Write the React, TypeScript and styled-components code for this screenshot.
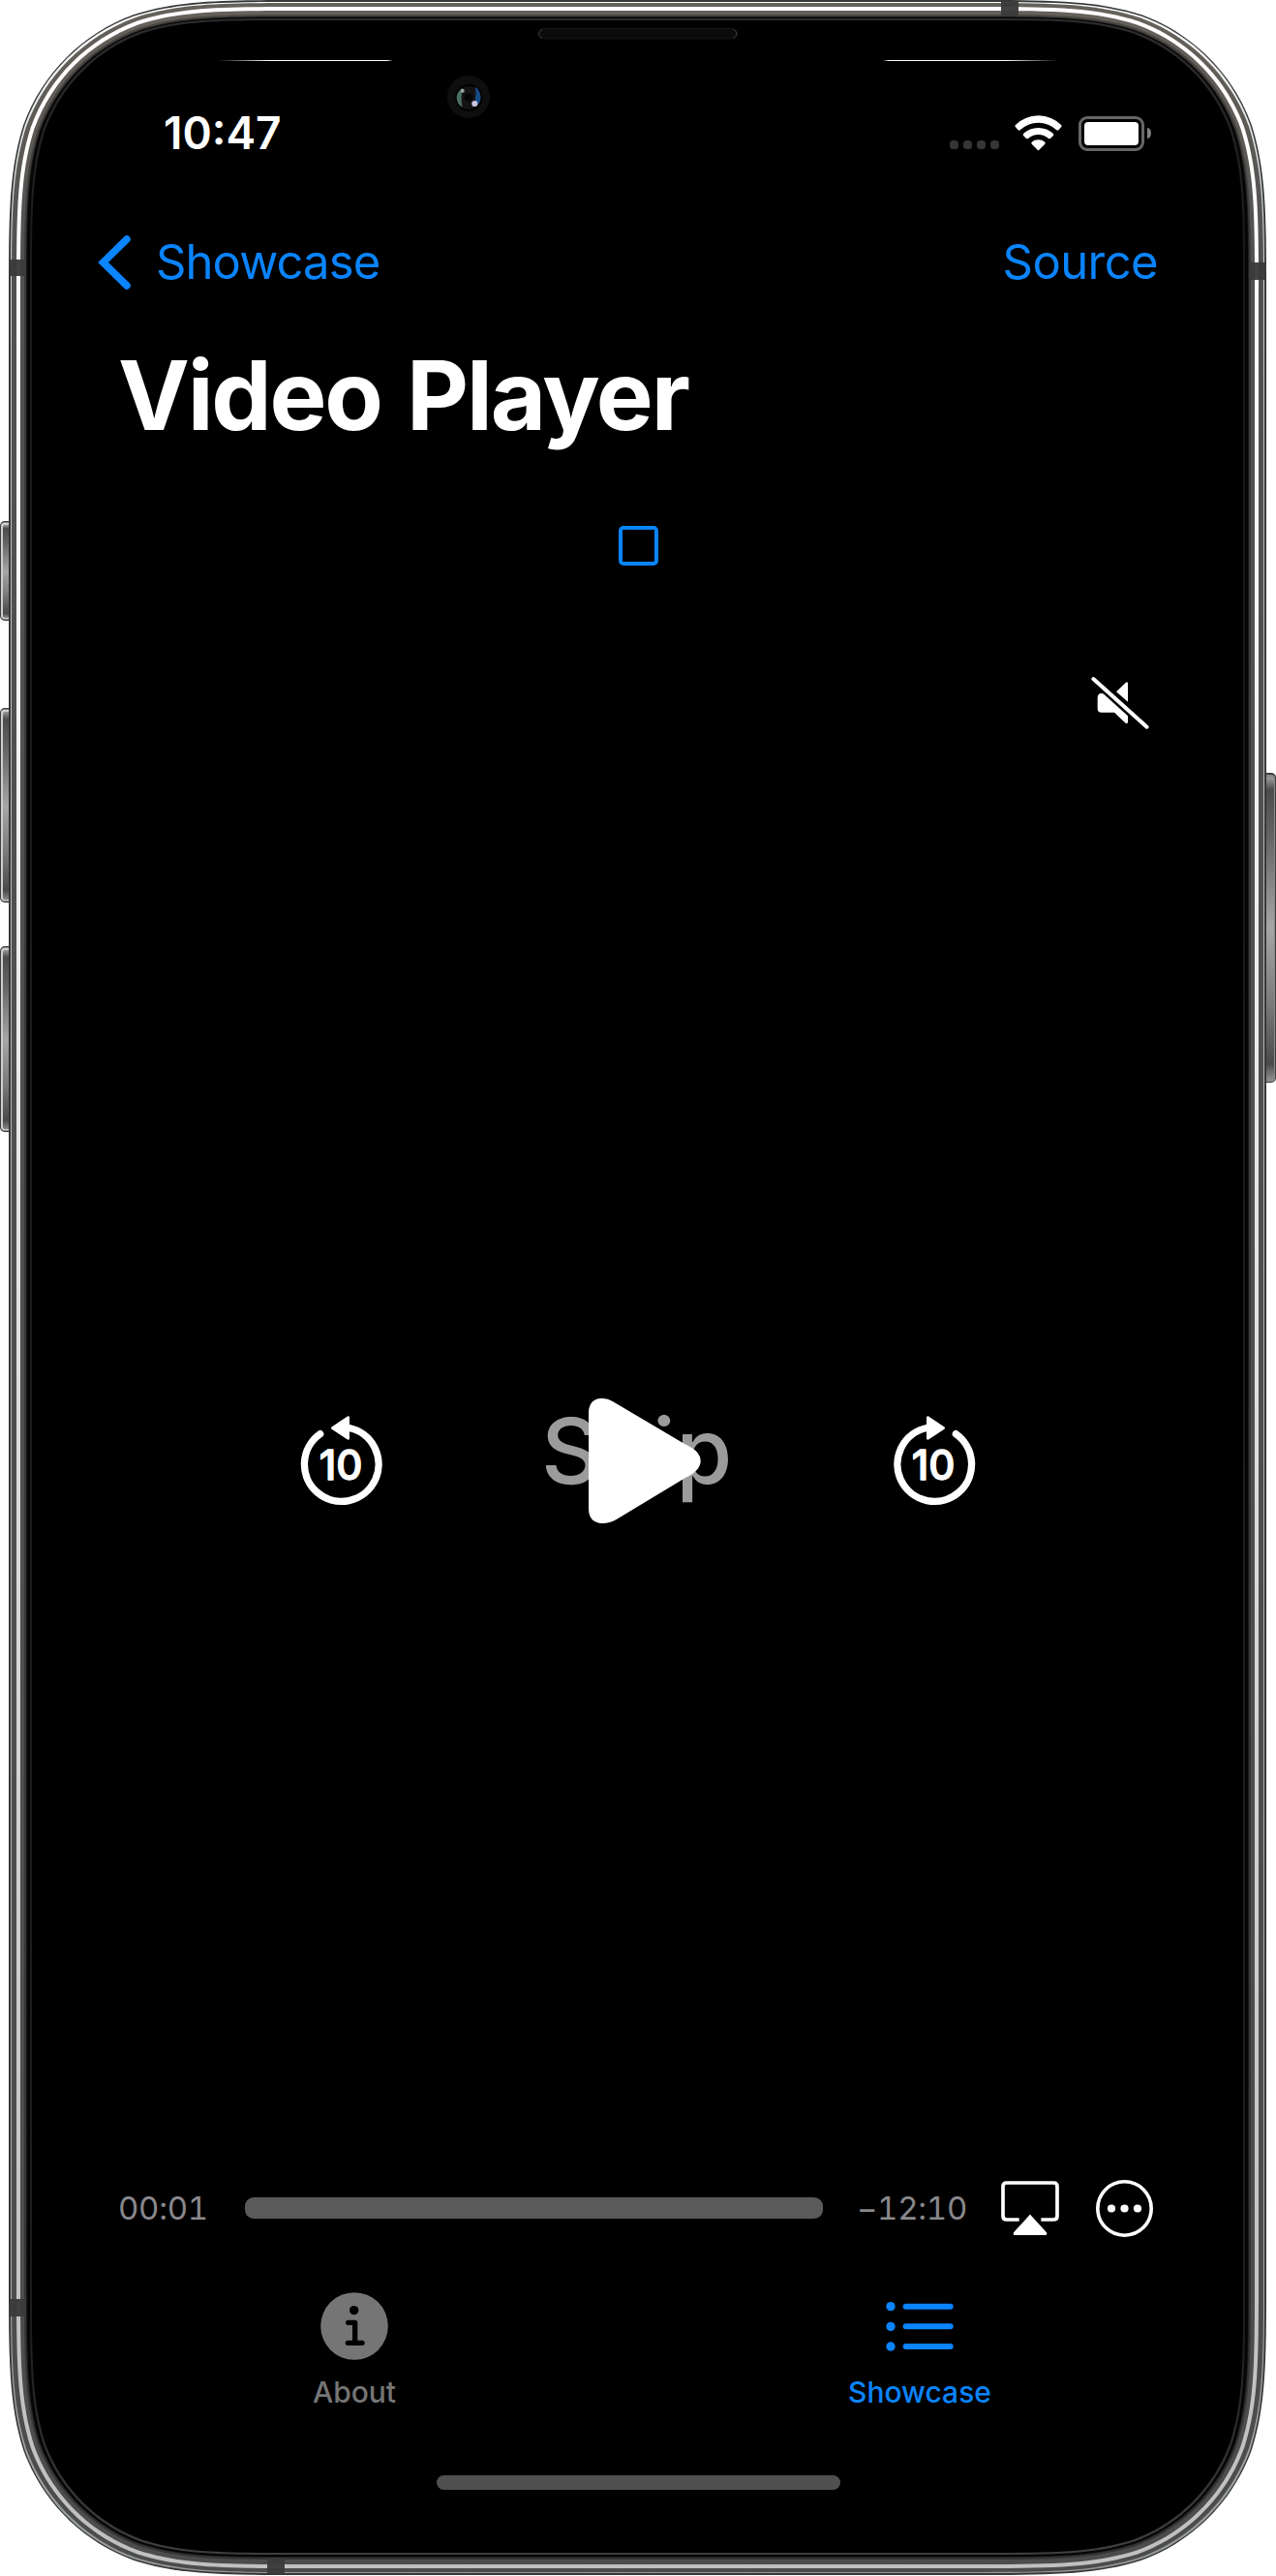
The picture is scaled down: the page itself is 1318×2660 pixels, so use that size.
import React from "react";
import styled, { createGlobalStyle } from "styled-components";

const BLUE = "#0a84ff";

const GlobalStyle = createGlobalStyle`
  body {
    margin: 0;
    background: #fff;
    font-family: Inter, "Liberation Sans", sans-serif;
  }
  svg { display: block; flex: none; }
`;

/* ---------- device ---------- */

const Device = styled.div`
  position: relative;
  width: 1318px;
  height: 2660px;
  overflow: hidden;
`;

const BezelArt = styled.svg`
  position: absolute;
  inset: 0;
`;

const Screen = styled.main`
  position: relative;
  display: flex;
  flex-direction: column;
  height: 2660px;
  box-sizing: border-box;
  padding-top: 100px;
`;

/** Rounded rectangle with continuous-curvature corners. */
const squircle = (x0: number, y0: number, x1: number, y1: number, r: number) => {
  const corner = (cx: number, cy: number, ax: number, ay: number, bx: number, by: number) => {
    // a points back along the incoming edge, b forward along the outgoing edge
    const p = (s: number, t: number) =>
      `${(cx + r * (s * ax + t * bx)).toFixed(2)} ${(cy + r * (s * ay + t * by)).toFixed(2)}`;
    return (
      `L${p(1.528665, 0)}` +
      `C${p(1.08849, 0)} ${p(0.868407, 0)} ${p(0.631494, 0.074911)}` +
      `C${p(0.372824, 0.16906)} ${p(0.16906, 0.372824)} ${p(0.074911, 0.631494)}` +
      `C${p(0, 0.868407)} ${p(0, 1.08849)} ${p(0, 1.528665)}`
    );
  };
  return (
    `M${(x0 + x1) / 2} ${y0}` +
    corner(x1, y0, -1, 0, 0, 1) +
    corner(x1, y1, 0, -1, -1, 0) +
    corner(x0, y1, 1, 0, 0, -1) +
    corner(x0, y0, 0, 1, 1, 0) +
    "Z"
  );
};

const RIGHT_EDGE = 1317;

type Layer = { x: number; top: number; bottom: number; r: number; fill: string };

const layers: Layer[] = [
  { x: 9, top: 0, bottom: 2659, r: 204, fill: "#363838" },
  { x: 11, top: 2, bottom: 2657, r: 200, fill: "url(#thin)" },
  { x: 12, top: 3, bottom: 2656, r: 202, fill: "url(#steel)" },
  { x: 17, top: 7, bottom: 2652, r: 197, fill: "url(#shine)" },
  { x: 21, top: 11, bottom: 2648, r: 193, fill: "url(#steel)" },
  { x: 25, top: 15, bottom: 2643, r: 188, fill: "url(#steelDark)" },
  { x: 27, top: 17, bottom: 2641, r: 186, fill: "#1a1a1a" },
  { x: 28, top: 18, bottom: 2640, r: 185, fill: "#050505" },
  { x: 31, top: 19, bottom: 2638, r: 181, fill: "url(#lip)" },
  { x: 33, top: 21, bottom: 2636, r: 180, fill: "#000" },
];

const sideButtons = [
  { y: 538, h: 103 },
  { y: 731, h: 201 },
  { y: 977, h: 192 },
];

const bands = [
  { x: 11, y: 268, w: 16, h: 17 },
  { x: 1290, y: 271, w: 16, h: 18 },
  { x: 11, y: 2374, w: 16, h: 18 },
  { x: 1034, y: 2, w: 18, h: 15 },
  { x: 276, y: 2641, w: 18, h: 16 },
];

const Bezel = () => (
  <BezelArt width="1318" height="2660" viewBox="0 0 1318 2660">
    <defs>
      <linearGradient id="steel" gradientUnits="userSpaceOnUse" x1="0" y1="0" x2="0" y2="2660">
        <stop offset="0" stopColor="#65615b" />
        <stop offset="0.04" stopColor="#5f5b56" />
        <stop offset="0.1" stopColor="#515151" />
        <stop offset="1" stopColor="#4c4c4c" />
      </linearGradient>
      <linearGradient id="steelDark" gradientUnits="userSpaceOnUse" x1="0" y1="0" x2="0" y2="2660">
        <stop offset="0" stopColor="#4a4640" />
        <stop offset="0.1" stopColor="#3a3a3a" />
        <stop offset="1" stopColor="#343434" />
      </linearGradient>
      <linearGradient id="shine" gradientUnits="userSpaceOnUse" x1="0" y1="0" x2="0" y2="2660">
        <stop offset="0" stopColor="#fff" />
        <stop offset="0.2" stopColor="#f8f8f8" />
        <stop offset="0.45" stopColor="#e6e6e6" />
        <stop offset="0.85" stopColor="#c6c6c6" />
        <stop offset="1" stopColor="#c0c0c0" />
      </linearGradient>
      <linearGradient id="thin" gradientUnits="userSpaceOnUse" x1="0" y1="0" x2="0" y2="2660">
        <stop offset="0" stopColor="#fff" />
        <stop offset="0.07" stopColor="#d4dcda" />
        <stop offset="0.2" stopColor="#bdbdbd" />
        <stop offset="0.9" stopColor="#a9a9a9" />
        <stop offset="1" stopColor="#949a98" />
      </linearGradient>
      <linearGradient id="lip" gradientUnits="userSpaceOnUse" x1="0" y1="0" x2="0" y2="2660">
        <stop offset="0" stopColor="#2d2d2d" />
        <stop offset="0.1" stopColor="#1a1a1a" />
        <stop offset="0.9" stopColor="#1c1c1c" />
        <stop offset="1" stopColor="#424242" />
      </linearGradient>
      <linearGradient id="key" x1="0" y1="0" x2="0" y2="1">
        <stop offset="0" stopColor="#9a9a9a" />
        <stop offset="0.04" stopColor="#4c4c4c" />
        <stop offset="0.2" stopColor="#656565" />
        <stop offset="0.5" stopColor="#a6a6a6" />
        <stop offset="0.75" stopColor="#7a7a7a" />
        <stop offset="0.95" stopColor="#4a4a4a" />
        <stop offset="1" stopColor="#8a8a8a" />
      </linearGradient>
      <linearGradient id="glowLeft" x1="0" x2="1">
        <stop offset="0" stopColor="#fff" stopOpacity="0" />
        <stop offset="0.3" stopColor="#fff" />
        <stop offset="0.97" stopColor="#fff" />
        <stop offset="1" stopColor="#fff" stopOpacity="0.2" />
      </linearGradient>
      <linearGradient id="glowRight" x1="1" x2="0">
        <stop offset="0" stopColor="#fff" stopOpacity="0" />
        <stop offset="0.3" stopColor="#fff" />
        <stop offset="0.97" stopColor="#fff" />
        <stop offset="1" stopColor="#fff" stopOpacity="0.2" />
      </linearGradient>
    </defs>

    {sideButtons.map((b) => (
      <g key={b.y}>
        <rect x="0" y={b.y} width="16" height={b.h} rx="5" fill="#3e3e3e" />
        <rect x="1" y={b.y + 1.5} width="15" height={b.h - 3} rx="4" fill="#cfcdcd" />
        <rect x="3" y={b.y + 4} width="13" height={b.h - 7} rx="2" fill="url(#key)" />
      </g>
    ))}
    <rect x="1300" y="798" width="18" height="320" rx="5" fill="#3e3e3e" />
    <rect x="1300" y="800" width="17" height="317" rx="4" fill="#8a8a8a" />
    <rect x="1300" y="803" width="16" height="311" rx="3" fill="url(#key)" />

    {layers.map((l) => (
      <path key={l.x} d={squircle(l.x, l.top, RIGHT_EDGE - l.x, l.bottom, l.r)} fill={l.fill} />
    ))}
    {bands.map((b) => (
      <rect key={`${b.x}-${b.y}`} x={b.x} y={b.y} width={b.w} height={b.h} fill="#3a3a3a" fillOpacity="0.96" />
    ))}

    <rect x="224" y="62" width="181" height="1" fill="url(#glowLeft)" />
    <rect x="913" y="62" width="181" height="1" fill="url(#glowRight)" />

    <rect x="556.5" y="29.5" width="204.5" height="10.5" rx="5.25" fill="#0b0b0b" stroke="#171717" />
    <path d="M560 30.5 Q556.5 32 556.5 35 Q556.5 38 560 39.5" fill="none" stroke="#3c3c3c" />
    <path d="M757.5 30.5 Q761 32 761 35 Q761 38 757.5 39.5" fill="none" stroke="#3c3c3c" />

    <circle cx="484" cy="100" r="22" fill="#0e0e0e" />
    <circle cx="484.3" cy="101" r="14" fill="#000" />
    <circle cx="484.3" cy="101" r="12" fill="#141212" />
    <path d="M478 91 Q472 94 471.6 101 Q472 108 477.5 110.5 Q475.500 101 478 91Z" fill="#4a6f60" />
    <path d="M490.5 89.5 Q496.5 93 496.600 101 Q496 107 492 109 L489.500 106 Q493 99 490.5 89.500Z" fill="#184a86" />
    <circle cx="484" cy="100.5" r="4.500" fill="#060606" />
    <circle cx="490.3" cy="107" r="3.1" fill="#c8c2da" />
    <circle cx="477.7" cy="93.700" r="2" fill="#95a89f" />
  </BezelArt>
);

/* ---------- status bar ---------- */

const StatusBar = styled.header`
  display: flex;
  align-items: center;
  height: 75px;
  padding: 0 129px 0 169px;
`;

const Clock = styled.time`
  flex: 1;
  font-size: 46px;
  font-weight: 600;
  line-height: 77px;
  color: #fff;
`;

const SignalDots = styled.div`
  display: flex;
  gap: 5px;
  margin: 24px 16px 0 0;
`;

const SignalDot = styled.i`
  width: 9px;
  height: 9px;
  border-radius: 3.5px;
  background: #353535;
`;

const Battery = styled.div`
  display: flex;
  align-items: center;
  gap: 3px;
  margin-left: 17px;
`;

const BatteryShell = styled.div`
  box-sizing: border-box;
  width: 68px;
  height: 36px;
  padding: 3px;
  border: 3px solid #666;
  border-radius: 9px;
`;

const BatteryCharge = styled.div`
  height: 24px;
  border-radius: 4px;
  background: #fff;
`;

const BatteryTip = styled.div`
  width: 4px;
  height: 11px;
  border-radius: 0 4px 4px 0 / 0 5.5px 5.5px 0;
  background: #808080;
`;

const WifiIcon = () => (
  <svg width="49" height="37" viewBox="0 0 147 111" fill="#fff">
    <path d="M73.5 1 Q116 2 145 31 Q147 34 144 37 L136 46 Q133 48 130 46 Q106 23 73.5 23 Q41 23 17 46 Q14 48 11 46 L3 37 Q0 34 2 31 Q31 2 73.5 1Z" />
    <path d="M73.5 39 Q101 39 120 57 Q122 60 120 63 L111 72 Q108 74 105 72 Q91 60 73.5 60 Q56 60 42 72 Q39 74 36 72 L27 63 Q25 60 27 57 Q46 39 73.5 39Z" />
    <path d="M73.5 76 Q86 76 94 83 Q96 86 94 89 L76 107 Q73.5 110 71 107 L53 89 Q51 86 53 83 Q61 76 73.5 76Z" />
  </svg>
);

/* ---------- navigation ---------- */

const NavBar = styled.nav`
  display: flex;
  align-items: center;
  justify-content: space-between;
  height: 70px;
  margin-top: 60px;
  padding: 0 122px 0 100px;
`;

const NavButton = styled.a<{ $tracking: number }>`
  display: flex;
  align-items: center;
  gap: 23px;
  padding-top: 1px;
  font-size: 49px;
  line-height: 72px;
  letter-spacing: ${(p) => p.$tracking}px;
  color: ${BLUE};
`;

const Title = styled.h1`
  margin: 43px 0 0 122px;
  font-size: 99px;
  font-weight: 700;
  line-height: 120px;
  letter-spacing: -2.2px;
  word-spacing: 5px;
  color: #fff;
`;

const FrameToggle = styled.button`
  box-sizing: border-box;
  width: 41px;
  height: 41px;
  margin: 75px 0 0 639px;
  padding: 0;
  border: 4px solid ${BLUE};
  border-radius: 5px;
  background: transparent;
`;

/* ---------- player ---------- */

const Player = styled.section`
  display: flex;
  flex-direction: column;
`;

const MuteRow = styled.div`
  display: flex;
  justify-content: flex-end;
  margin-top: 96px;
  padding-right: 108px;
`;

const Controls = styled.div`
  display: flex;
  align-items: flex-start;
  gap: 120px;
  height: 180px;
  margin-top: 650px;
  padding-left: 290px;
`;

const SeekIcon = styled.svg`
  margin-top: 20px;
`;

const Numeral = styled.text`
  font: 500 129px Inter, sans-serif;
`;

const PlayStack = styled.div`
  display: grid;
  width: 240px;
  > * { grid-area: 1 / 1; }
`;

const SkipLabel = styled.span`
  padding-left: 19px;
  font-size: 94px;
  font-weight: 550;
  line-height: 156px;
  letter-spacing: 0.8px;
  color: #9b9b9b;
`;

const Seek = ({ forward = false }: { forward?: boolean }) => (
  <SeekIcon width="130" height="130" viewBox="0 0 390 390">
    <g transform={forward ? "translate(384 0) scale(-1 1)" : undefined}>
      <path
        d="M122 122 A115 115 0 1 0 212 103.5"
        fill="none"
        stroke="#fff"
        strokeWidth="22"
        strokeLinecap="round"
      />
      <path d="M160 104 L209 71 V136Z" fill="#fff" stroke="#fff" strokeWidth="8" strokeLinejoin="round" />
    </g>
    <Numeral
      x={forward ? 125 : 119}
      y="265"
      textLength="134"
      lengthAdjust="spacingAndGlyphs"
      fill="#fff"
      stroke="#fff"
      strokeWidth="4"
      strokeLinejoin="round"
    >
      10
    </Numeral>
  </SeekIcon>
);

const Scrubber = styled.div`
  display: flex;
  align-items: center;
  height: 80px;
  margin-top: 640px;
  padding-left: 122px;
`;

const TimeLabel = styled.span<{ $width: number }>`
  width: ${(p) => p.$width}px;
  margin-top: -1px;
  font-size: 33px;
  font-variant-numeric: tabular-nums;
  letter-spacing: -0.3px;
  white-space: nowrap;
  color: #89888d;
`;

const Track = styled.div`
  width: 597px;
  height: 22px;
  margin-right: 35px;
  border-radius: 9px;
  background: #5a5a5a;
`;

/* ---------- tab bar ---------- */

const TabBar = styled.footer`
  display: grid;
  grid-template-columns: 584px 584px;
  margin: 47px 0 0 74px;
`;

const Tab = styled.a<{ $active?: boolean }>`
  display: flex;
  flex-direction: column;
  align-items: center;
  gap: 13px;
  font-size: 30px;
  font-weight: 500;
  line-height: 40px;
  color: ${(p) => (p.$active ? BLUE : "#757575")};
`;

const HomeIndicator = styled.div`
  width: 417px;
  height: 15px;
  margin: 66px 0 0 451px;
  border-radius: 8px;
  background: #505050;
`;

export default function App() {
  return (
    <>
      <GlobalStyle />
      <Device>
        <Bezel />
        <Screen>
          <StatusBar>
            <Clock>10:47</Clock>
            <SignalDots>
              <SignalDot />
              <SignalDot />
              <SignalDot />
              <SignalDot />
            </SignalDots>
            <WifiIcon />
            <Battery>
              <BatteryShell>
                <BatteryCharge />
              </BatteryShell>
              <BatteryTip />
            </Battery>
          </StatusBar>

          <NavBar>
            <NavButton $tracking={-0.9}>
              <svg width="38" height="60" viewBox="0 0 38 60">
                <path
                  d="M31 6 L6.5 30 L31 54"
                  fill="none"
                  stroke={BLUE}
                  strokeWidth="7.5"
                  strokeLinecap="round"
                  strokeLinejoin="miter"
                />
              </svg>
              Showcase
            </NavButton>
            <NavButton $tracking={-0.6}>Source</NavButton>
          </NavBar>

          <Title>Video Player</Title>
          <FrameToggle aria-label="Toggle frame" />

          <Player>
            <MuteRow>
              <svg width="110" height="90" viewBox="0 0 330 270" fill="#fff">
                <path d="M113 108 Q118 108 122 112 L195 178 V197 Q194 203 188 200 L153 167 H113 Q101 167 101 155 V122 Q101 108 113 108Z" />
                <path d="M159 103 L188 75 Q195 70 195 78 V134Z" />
                <path d="M88 63 L254 212" stroke="#fff" strokeWidth="12" strokeLinecap="round" />
              </svg>
            </MuteRow>

            <Controls>
              <Seek />
              <PlayStack>
                <SkipLabel>Skip</SkipLabel>
                <svg width="240" height="180" viewBox="0 0 720 540">
                  <path
                    d="M204 114 Q206 74 244 72 Q262 71 278 81 L500 212 Q551 234 551 266 Q551 296 500 320 L290 447 Q270 459 246 459 Q206 457 204 417Z"
                    fill="#fff"
                  />
                </svg>
              </PlayStack>
              <Seek forward />
            </Controls>

            <Scrubber>
              <TimeLabel $width={131}>00:01</TimeLabel>
              <Track />
              <TimeLabel $width={149}>−12:10</TimeLabel>
              <svg width="60" height="56" viewBox="0 0 180 168">
                <path
                  d="M56 120 H17 Q6 120 6 109 V17 Q6 6 17 6 H163 Q174 6 174 17 V109 Q174 120 163 120 H124"
                  fill="none"
                  stroke="#fff"
                  strokeWidth="11"
                />
                <path d="M90 104 L34 168 H146Z" stroke="#000" strokeWidth="16" />
                <path d="M87 107 Q90 102 93 107 L141 160 Q144 167 138 168 H42 Q36 167 39 160Z" fill="#fff" />
              </svg>
              <svg width="97" height="59" viewBox="-38 0 97 59" fill="#fff">
                <circle cx="29.5" cy="29.5" r="27.7" fill="none" stroke="#fff" strokeWidth="3.6" />
                <circle cx="16" cy="29.5" r="4.1" />
                <circle cx="29.5" cy="29.5" r="4.1" />
                <circle cx="43" cy="29.5" r="4.1" />
              </svg>
            </Scrubber>
          </Player>

          <TabBar>
            <Tab>
              <svg width="70" height="70" viewBox="0 0 210 210">
                <circle cx="105" cy="105" r="104.5" fill="#757575" />
                <circle cx="104" cy="56" r="14" fill="#000" />
                <path
                  d="M86 94 H107 V156 M85 157 H129"
                  fill="none"
                  stroke="#000"
                  strokeWidth="16"
                  strokeLinecap="round"
                  strokeLinejoin="round"
                />
              </svg>
              About
            </Tab>
            <Tab $active>
              <svg width="70" height="70" viewBox="0 0 210 210" fill={BLUE}>
                {[44, 106, 168].map((y) => (
                  <g key={y}>
                    <circle cx="15" cy={y} r="14" />
                    <rect x="53" y={y - 9} width="156" height="18" rx="9" />
                  </g>
                ))}
              </svg>
              Showcase
            </Tab>
          </TabBar>
          <HomeIndicator />
        </Screen>
      </Device>
    </>
  );
}
